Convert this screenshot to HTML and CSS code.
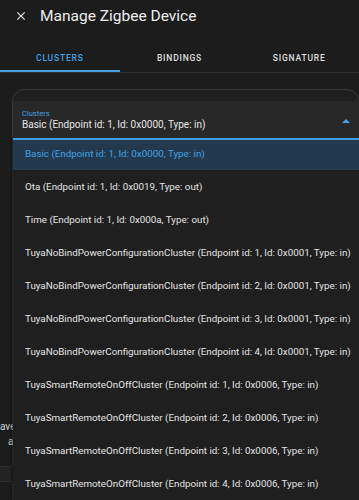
FILE: index.html
```html
<!DOCTYPE html>
<html lang="en">
<head>
    <meta charset="UTF-8">
    <meta name="viewport" content="width=device-width, initial-scale=1.0">
    <title>Manage Zigbee Device</title>
    <link rel="stylesheet" href="styles.css">
</head>
<body>
    <div class="dialog">
        <div class="topbar">
            <svg class="close-icon" viewBox="0 0 24 24" width="14" height="14">
                <path d="M19,6.41L17.59,5L12,10.59L6.41,5L5,6.41L10.59,12L5,17.59L6.41,19L12,13.41L17.59,19L19,17.59L13.41,12L19,6.41Z" fill="#e8e8e8"/>
            </svg>
            <div class="title">Manage Zigbee Device</div>
        </div>
        <div class="tabs">
            <div class="tab active">Clusters</div>
            <div class="tab">Bindings</div>
            <div class="tab">Signature</div>
        </div>

        <div class="content">
            <div class="card">
                <div class="card-text">
                    <p class="line-one">ave</p>
                    <p class="line-two">ad</p>
                </div>
                <div class="card-footer"></div>
            </div>

            <div class="select">
                <div class="select-label">Clusters</div>
                <div class="select-value">Basic (Endpoint id: 1, Id: 0x0000, Type: in)</div>
                <svg class="select-arrow" viewBox="0 0 10 5" width="8" height="4">
                    <path d="M0 5 L5 0 L10 5 Z" fill="#42a0e4"/>
                </svg>
            </div>

            <ul class="menu">
                <li class="selected">Basic (Endpoint id: 1, Id: 0x0000, Type: in)</li>
                <li>Ota (Endpoint id: 1, Id: 0x0019, Type: out)</li>
                <li>Time (Endpoint id: 1, Id: 0x000a, Type: out)</li>
                <li>TuyaNoBindPowerConfigurationCluster (Endpoint id: 1, Id: 0x0001, Type: in)</li>
                <li>TuyaNoBindPowerConfigurationCluster (Endpoint id: 2, Id: 0x0001, Type: in)</li>
                <li>TuyaNoBindPowerConfigurationCluster (Endpoint id: 3, Id: 0x0001, Type: in)</li>
                <li>TuyaNoBindPowerConfigurationCluster (Endpoint id: 4, Id: 0x0001, Type: in)</li>
                <li>TuyaSmartRemoteOnOffCluster (Endpoint id: 1, Id: 0x0006, Type: in)</li>
                <li>TuyaSmartRemoteOnOffCluster (Endpoint id: 2, Id: 0x0006, Type: in)</li>
                <li>TuyaSmartRemoteOnOffCluster (Endpoint id: 3, Id: 0x0006, Type: in)</li>
                <li>TuyaSmartRemoteOnOffCluster (Endpoint id: 4, Id: 0x0006, Type: in)</li>
            </ul>
        </div>
    </div>
</body>
</html>
```

FILE: styles.css
```css
body {
    margin: 0;
    background: #1c1c1c;
    font-family: Roboto, 'Noto Sans', sans-serif;
    color: #e1e1e1;
    overflow: hidden;
}
.dialog {
    width: 359px;
    height: 500px;
    overflow: hidden;
}
.topbar {
    display: flex;
    align-items: center;
    height: 32px;
    padding-left: 14px;
}
.close-icon {
    flex-shrink: 0;
}
.title {
    margin-left: 12px;
    font-size: 15.5px;
    color: #ececec;
}
.tabs {
    display: flex;
    height: 40px;
    border-bottom: 1px solid #2c2c2c;
}
.tab {
    flex: 1;
    display: flex;
    align-items: flex-end;
    justify-content: center;
    padding-bottom: 7px;
    font-size: 8.5px;
    font-weight: 500;
    letter-spacing: 0.8px;
    text-transform: uppercase;
    color: #dedede;
    border-bottom: 2px solid transparent;
}
.tab.active {
    color: #42a0e4;
    border-bottom-color: #42a0e4;
}
.content {
    position: relative;
    height: 427px;
    padding-top: 16px;
}
.card {
    margin-left: 12px;
    height: 420px;
    border: 1px solid #383838;
    border-radius: 12px;
    background: #1e1e1e;
}
.card-text {
    position: absolute;
    left: 0;
    top: 348px;
    font-size: 10px;
    color: #cfcfcf;
}
.card-text p {
    margin: 0 0 4px 0;
}
.card-text .line-two {
    padding-left: 8px;
}
.card-footer {
    position: absolute;
    left: 0;
    top: 393px;
    width: 14px;
    height: 14px;
    background: #222;
    border-top: 1px solid #2c2c2c;
    border-bottom: 1px solid #2c2c2c;
}
.select {
    position: absolute;
    left: 13px;
    top: 28px;
    right: 0;
    height: 37px;
    background: #282828;
    border-bottom: 2px solid #42a0e4;
    padding-left: 9px;
    z-index: 2;
}
.select-label {
    margin-top: 8px;
    font-size: 7.5px;
    color: #42a0e4;
}
.select-value {
    margin-top: 1px;
    font-size: 10px;
    color: #e6e6e6;
}
.select-arrow {
    position: absolute;
    right: 9px;
    top: 18px;
}
.menu {
    position: absolute;
    left: 13px;
    top: 64px;
    right: 0;
    bottom: 0;
    margin: 0;
    padding: 0;
    list-style: none;
    background: #1f1f1f;
    box-shadow: -1px 0 3px rgba(0, 0, 0, 0.5);
    z-index: 1;
}
.menu li {
    height: 33px;
    line-height: 33px;
    padding-left: 12px;
    font-size: 9.8px;
    white-space: nowrap;
    color: #e3e3e3;
}
.menu li.selected {
    background: #233a4e;
    color: #42a0e4;
}
```
